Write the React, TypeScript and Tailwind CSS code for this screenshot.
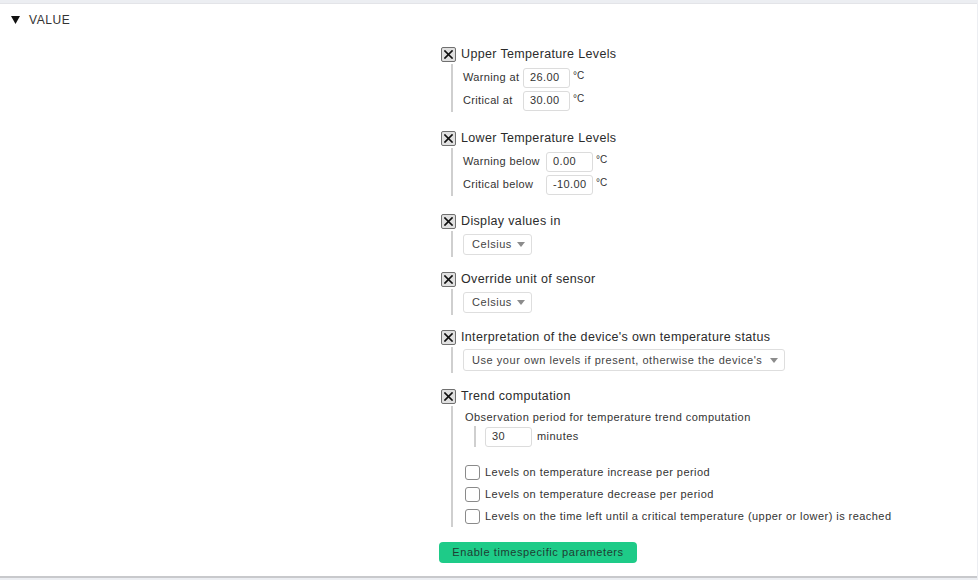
import type {ReactNode} from 'react';

const font = {fontFamily: '"Liberation Sans", Arial, sans-serif'};

function CheckBox({checked}: {checked: boolean}) {
  if (!checked) {
    return <span className="block w-[15px] h-[15px] rounded-[3px] border border-[#8a8a8a] bg-white shrink-0" />;
  }
  return (
    <span className="flex items-center justify-center w-[15px] h-[15px] rounded-[2px] border border-[#707070] bg-[#e0e0e0] shrink-0">
      <svg width="9" height="9" viewBox="0 0 9 9">
        <path d="M1 1 L8 8 M8 1 L1 8" stroke="#111" strokeWidth="1.7" strokeLinecap="square" />
      </svg>
    </span>
  );
}

function Group({title, children, className = ''}: {title: string; children: ReactNode; className?: string}) {
  return (
    <div className={className}>
      <div className="flex items-center h-[16px] pl-[2px]">
        <CheckBox checked />
        <span className="ml-[5px] text-[12.5px] tracking-[0.35px] text-[#2b2b2b]">{title}</span>
      </div>
      <div className="ml-[12px] mt-[2px] border-l-2 border-[#cfcfcf] pl-[10px]">{children}</div>
    </div>
  );
}

function NumInput({value}: {value: string}) {
  return (
    <span className="flex items-center h-[20px] w-[47px] border border-[#dcdcdc] rounded-[3px] bg-white pl-[6px] text-[11px] tracking-[0.4px] text-[#333]">
      {value}
    </span>
  );
}

function Select({label, width, h = 'h-[21px]'}: {label: string; width: string; h?: string}) {
  return (
    <div className={`flex items-center justify-between ${h} ${width} border border-[#dedede] rounded-[3px] bg-white pl-[8px] pr-[6px] text-[11px] tracking-[0.55px] text-[#444]`}>
      <span>{label}</span>
      <svg width="8" height="5" viewBox="0 0 8 5">
        <path d="M0 0 L8 0 L4 5 Z" fill="#8c8c8c" />
      </svg>
    </div>
  );
}

function LevelRow({label, value, labelW}: {label: string; value: string; labelW: string}) {
  return (
    <div className="flex items-center h-[23px]">
      <span className={`${labelW} text-[11px] tracking-[0.35px] text-[#333]`}>{label}</span>
      <NumInput value={value} />
      <span className="ml-[3px] self-start mt-[2px] text-[10px] text-[#333]">°C</span>
    </div>
  );
}

function LevelBox({label}: {label: string}) {
  return (
    <div className="flex items-center h-[22px] gap-[5px]">
      <CheckBox checked={false} />
      <span className="text-[11px] tracking-[0.45px] text-[#333]">{label}</span>
    </div>
  );
}

export default function App() {
  return (
    <div className="w-[978px] h-[580px] bg-[#eceef2] pt-[3px] overflow-hidden" style={font}>
      <div className="w-[977px] h-[575px] bg-white border-t border-[#e3e4e8] border-b-2 border-b-[#c8c9cc]">
        {/* Section header */}
        <div className="flex items-center h-[30px] pl-[11px] pt-[1px]">
          <svg width="9" height="8" viewBox="0 0 9 8">
            <path d="M0 0 L9 0 L4.5 8 Z" fill="#111" />
          </svg>
          <span className="ml-[9px] text-[12px] tracking-[0.6px] text-[#333]">VALUE</span>
        </div>

        {/* Value form */}
        <div className="pl-[439px] pt-[12px]">
          <Group title="Upper Temperature Levels">
            <div className="pt-[2px]">
              <LevelRow label="Warning at" value="26.00" labelW="w-[60px]" />
              <LevelRow label="Critical at" value="30.00" labelW="w-[60px]" />
            </div>
          </Group>

          <Group title="Lower Temperature Levels" className="mt-[18px]">
            <div className="pt-[2px]">
              <LevelRow label="Warning below" value="0.00" labelW="w-[83px]" />
              <LevelRow label="Critical below" value="-10.00" labelW="w-[83px]" />
            </div>
          </Group>

          <Group title="Display values in" className="mt-[17px]">
            <div className="pt-[3px] pb-[2px]">
              <Select label="Celsius" width="w-[69px]" />
            </div>
          </Group>

          <Group title="Override unit of sensor" className="mt-[14px]">
            <div className="pt-[3px] pb-[2px]">
              <Select label="Celsius" width="w-[69px]" />
            </div>
          </Group>

          <Group title="Interpretation of the device's own temperature status" className="mt-[14px]">
            <div className="pt-[2px] pb-[2px]">
              <Select label="Use your own levels if present, otherwise the device's" width="w-[322px]" h="h-[22px]" />
            </div>
          </Group>

          <Group title="Trend computation" className="mt-[15px]">
            <div className="pl-[2px] pt-[4px]">
              <div className="text-[11px] tracking-[0.45px] text-[#333] h-[14px] leading-[14px]">
                Observation period for temperature trend computation
              </div>
              <div className="ml-[9px] mt-[2px] border-l-2 border-[#cfcfcf] pl-[9px] flex items-center h-[21px]">
                <NumInput value="30" />
                <span className="ml-[5px] text-[11px] tracking-[0.45px] text-[#333]">minutes</span>
              </div>
              <div className="mt-[14px]">
                <LevelBox label="Levels on temperature increase per period" />
                <LevelBox label="Levels on temperature decrease per period" />
                <LevelBox label="Levels on the time left until a critical temperature (upper or lower) is reached" />
              </div>
            </div>
          </Group>

          <button className="mt-[15px] h-[21px] w-[198px] rounded-[4px] bg-[#1ecb88] text-[11px] tracking-[0.6px] text-[#1f3d33]">
            Enable timespecific parameters
          </button>
        </div>
      </div>
    </div>
  );
}
